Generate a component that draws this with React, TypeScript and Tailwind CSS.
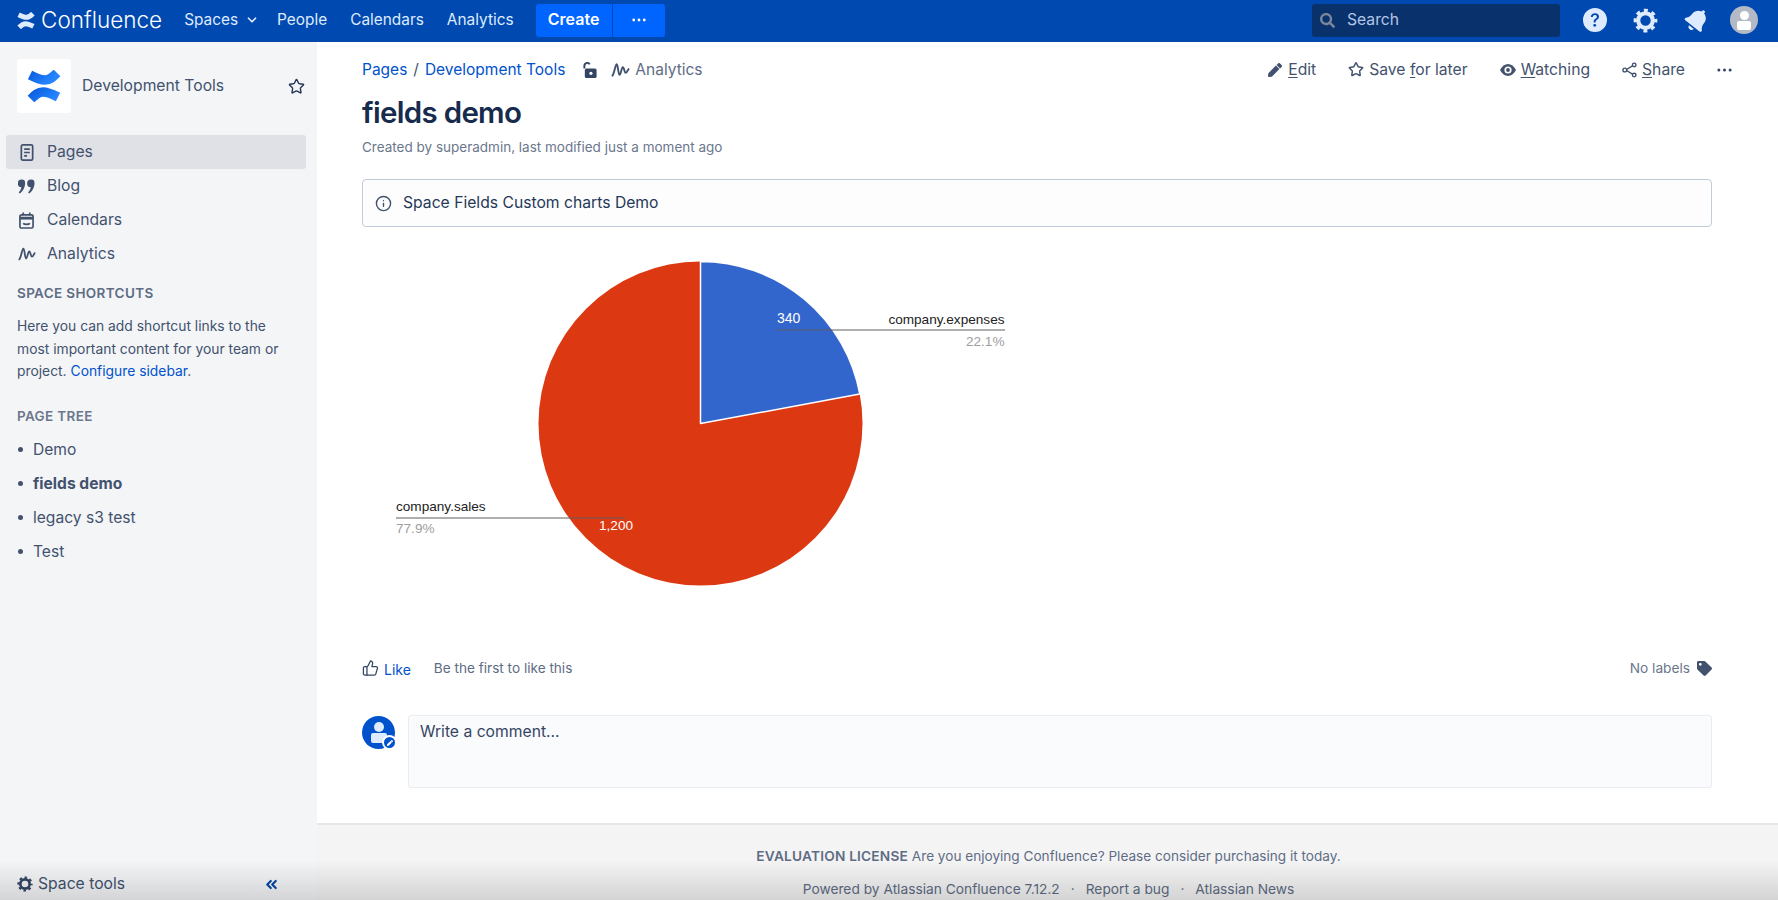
import { ChevronDown, ChevronsLeft, Info, Star, ThumbsUp } from "lucide-react";
import { FaBell, FaPen, FaSearch, FaTag } from "react-icons/fa";
import { BsQuestionCircleFill } from "react-icons/bs";

const topNav = [
  { label: "People", ml: "ml-[18px]" },
  { label: "Calendars", ml: "ml-[23px]" },
  { label: "Analytics", ml: "ml-[23px]" },
];

const tree = ["Demo", "fields demo", "legacy s3 test", "Test"];

function ConfluenceMark({ className, color }: { className: string; color: string }) {
  return (
    <svg viewBox="0 0 34 32" className={className} fill="none" strokeWidth="9.5">
      <defs>
        <linearGradient id="confBand" x1="0" y1="0" x2="1" y2="0.3">
          <stop offset="0" stopColor="#0b5fe0" />
          <stop offset="1" stopColor="#2684ff" />
        </linearGradient>
      </defs>
      <path d="M3 5 C9 8 13 10 18 10 C23 10 26 7 30 3" stroke={color} />
      <path d="M31 27 C25 24 21 22 16 22 C11 22 8 25 4 29" stroke={color} />
    </svg>
  );
}

function Dots({ className }: { className: string }) {
  return (
    <svg viewBox="0 0 16 4" className={className} fill="currentColor">
      <circle cx="2" cy="2" r="1.6" />
      <circle cx="8" cy="2" r="1.6" />
      <circle cx="14" cy="2" r="1.6" />
    </svg>
  );
}

function GearIcon({ className }: { className: string }) {
  return (
    <svg viewBox="0 0 24 24" className={className} fill="none" stroke="currentColor">
      <circle cx="12" cy="12" r="7" strokeWidth="4" />
      <circle cx="12" cy="12" r="9.8" strokeWidth="3.2" strokeDasharray="3.8 3.9" strokeDashoffset="1.9" />
    </svg>
  );
}

function PulseIcon({ className }: { className: string }) {
  return (
    <svg viewBox="0 0 20 16" className={className} fill="none" stroke="currentColor" strokeWidth="2" strokeLinecap="round" strokeLinejoin="round">
      <path d="M1.5 14 C3.5 12 4.5 2 6 2 C7.5 2 7.5 13 9 13 C10.5 13 11 5 12.5 5 C14 5 14 11 15.5 11 C17 11 17.5 8 18.5 7" />
    </svg>
  );
}

function QuoteIcon() {
  return (
    <svg viewBox="0 0 17 15" className="h-[15px] w-[17px]" fill="currentColor">
      <path d="M3.8 0.5a3.3 3.3 0 0 1 3.3 3.4c0 4.4-2.4 8.5-5.4 10.6l-1-1.2c1.4-1.6 2.4-3.2 2.7-5.1A3.3 3.3 0 0 1 3.8 0.5z" />
      <path d="M13.2 0.5a3.3 3.3 0 0 1 3.3 3.4c0 4.4-2.4 8.5-5.4 10.6l-1-1.2c1.4-1.6 2.4-3.2 2.7-5.1a3.3 3.3 0 0 1 .4-7.7z" />
    </svg>
  );
}

function EyeIcon() {
  return (
    <svg viewBox="0 0 16 12" className="h-[12px] w-[16px]">
      <path d="M0 6C2 2.2 5 0 8 0s6 2.2 8 6c-2 3.8-5 6-8 6S2 9.8 0 6z" fill="currentColor" />
      <circle cx="8" cy="6" r="3.6" fill="#fff" />
      <circle cx="8" cy="6" r="1.9" fill="currentColor" />
    </svg>
  );
}

function PagesIcon() {
  return (
    <svg viewBox="0 0 14 18" className="h-[17px] w-[14px]" fill="none" stroke="currentColor" strokeWidth="1.8">
      <rect x="1" y="1" width="12" height="16" rx="1.5" />
      <path d="M4 5.5h6M4 9h6M4 12.5h3" />
    </svg>
  );
}

function CalendarIcon() {
  return (
    <svg viewBox="0 0 16 18" className="h-[17px] w-[15px]" fill="none" stroke="currentColor" strokeWidth="1.8">
      <rect x="1" y="3" width="14" height="14" rx="1.5" />
      <path d="M1 6.5h14" strokeWidth="3" />
      <path d="M4.5 0.5v3M11.5 0.5v3" />
      <path d="M4.5 12c1 1.6 6 1.6 7 0" />
    </svg>
  );
}

function LockOpenIcon() {
  return (
    <svg viewBox="0 0 14 17" className="h-[16px] w-[14px]">
      <path d="M1 7V4a3 3 0 0 1 5.6-1.5" fill="none" stroke="currentColor" strokeWidth="2" />
      <rect x="1.5" y="7" width="12.5" height="10" rx="1.6" fill="currentColor" />
      <circle cx="8" cy="12" r="1.7" fill="#fff" />
    </svg>
  );
}

function ShareIcon() {
  return (
    <svg viewBox="0 0 16 16" className="h-[16px] w-[15px]" fill="none" stroke="currentColor" strokeWidth="1.5">
      <path d="M4 8 L12 3 M4 8 L12 13" />
      <circle cx="3" cy="8" r="2" fill="#fff" />
      <circle cx="13" cy="2.6" r="1.9" fill="#fff" />
      <circle cx="13" cy="13.4" r="1.9" fill="#fff" />
    </svg>
  );
}

function SideItem({ icon, label, active }: { icon: React.ReactNode; label: string; active?: boolean }) {
  return (
    <div className={`flex h-[34px] items-center rounded-[3px] ${active ? "bg-[#dfe1e6]" : ""}`}>
      <span className="flex w-[41px] shrink-0 justify-center px-[1px] text-[#42526e]">{icon}</span>
      <span className="text-[15.7px] text-[#42526e]">{label}</span>
    </div>
  );
}

function PieChart() {
  return (
    <svg width="700" height="400" className="block font-['Liberation_Sans',sans-serif]">
      <circle cx="338.5" cy="188.5" r="162" fill="#dc3912" />
      <path d="M338.5 188.5 V26.5 A162 162 0 0 1 497.8 159.1 Z" fill="#3366cc" stroke="#fff" strokeWidth="1.5" strokeLinejoin="round" />
      <text x="415" y="88" fontSize="14" fill="#fff">340</text>
      <text x="642.5" y="89" fontSize="13.6" fill="#222" textAnchor="end">company.expenses</text>
      <path d="M415 95 H643" stroke="#5f5f5f" strokeWidth="1" fill="none" />
      <text x="642.5" y="111" fontSize="13.6" fill="#9e9e9e" textAnchor="end">22.1%</text>
      <text x="34" y="276" fontSize="13.6" fill="#222">company.sales</text>
      <path d="M34 283 H263" stroke="#5f5f5f" strokeWidth="1" fill="none" />
      <text x="34" y="298" fontSize="13.6" fill="#9e9e9e">77.9%</text>
      <text x="237" y="295" fontSize="13.6" fill="#fff">1,200</text>
    </svg>
  );
}

function PageAction({ icon, before, hot, after, ml }: { icon: React.ReactNode; before?: string; hot: string; after: string; ml: string }) {
  return (
    <div className={`flex items-center gap-[5px] ${ml}`}>
      <span className="flex w-[16px] justify-center text-[#42526e]">{icon}</span>
      <span className="text-[15.7px] text-[#42526e]">
        {before}
        <span className="underline underline-offset-2">{hot}</span>
        {after}
      </span>
    </div>
  );
}

export default function App() {
  return (
    <div className="relative flex h-[900px] flex-col overflow-hidden bg-white font-['Inter',sans-serif] text-[#42526e]">
      <header className="flex h-[42px] shrink-0 items-center border-b border-[#0747a6] bg-[#0049b0] pb-[1px] text-[#deebff]">
        <ConfluenceMark className="ml-[17px] h-[17px] w-[18px]" color="#deebff" />
        <span className="ml-[6px] text-[22.5px] leading-none font-light text-white">Confluence</span>
        <span className="ml-[22px] text-[15.4px]">Spaces</span>
        <ChevronDown className="ml-[7px] h-[14px] w-[14px]" strokeWidth={3} />
        {topNav.map((n) => (
          <span key={n.label} className={`${n.ml} text-[15.4px]`}>
            {n.label}
          </span>
        ))}
        <div className="ml-[22px] flex h-[33px] w-[129px] items-center rounded-[3px] bg-[#0065ff] text-white">
          <span className="flex h-[33px] w-[77px] justify-center border-r border-[#0049b0] text-[16px] leading-[31px] font-semibold">Create</span>
          <span className="flex flex-1 justify-center">
            <Dots className="h-[4px] w-[14px]" />
          </span>
        </div>
        <div className="ml-auto flex h-[33px] w-[248px] items-center rounded-[3px] bg-[#09326c] pl-[8px]">
          <FaSearch className="h-[15px] w-[15px] text-[#7a869a]" />
          <span className="ml-[12px] text-[15.7px] text-[#b3c6e6]">Search</span>
        </div>
        <BsQuestionCircleFill className="ml-[23px] h-[24px] w-[24px]" />
        <GearIcon className="ml-[26px] h-[25px] w-[25px]" />
        <FaBell className="ml-[27px] h-[24px] w-[24px] rotate-[38deg]" />
        <div className="mr-[20px] ml-[21px] flex h-[28px] w-[28px] flex-col items-center justify-center rounded-full bg-[#b3bac5]">
          <span className="h-[9px] w-[9px] rounded-full bg-white" />
          <span className="mt-[1px] h-[9px] w-[14px] rounded-[2px] bg-white" />
        </div>
      </header>

      <div className="flex min-h-0 flex-1">
        <aside className="flex w-[317px] shrink-0 flex-col bg-[#f4f5f7] pt-[17px] pr-[11px] pl-[6px]">
          <div className="flex items-center pl-[11px]">
            <div className="flex h-[54px] w-[54px] items-center justify-center rounded-[3px] bg-white">
              <ConfluenceMark className="h-[32px] w-[34px]" color="url(#confBand)" />
            </div>
            <span className="ml-[11px] text-[15.7px] text-[#42526e]">Development Tools</span>
            <Star className="mr-[1px] ml-auto h-[17px] w-[17px] text-[#253858]" strokeWidth={2} />
          </div>
          <nav className="mt-[22px]">
            <SideItem active icon={<PagesIcon />} label="Pages" />
            <SideItem icon={<QuoteIcon />} label="Blog" />
            <SideItem icon={<CalendarIcon />} label="Calendars" />
            <SideItem icon={<PulseIcon className="h-[16px] w-[18px]" />} label="Analytics" />
          </nav>
          <div className="mt-[13px] pl-[11px]">
            <h4 className="text-[13.5px] leading-[18px] font-semibold tracking-[0.35px] text-[#5e6c84]">SPACE SHORTCUTS</h4>
            <p className="mt-[13px] text-[13.85px] leading-[22.5px] whitespace-nowrap text-[#42526e]">
              Here you can add shortcut links to the
              <br />
              most important content for your team or
              <br />
              project. <span className="text-[#0052cc]">Configure sidebar</span>.
            </p>
            <h4 className="mt-[24px] text-[13.5px] leading-[18px] font-semibold tracking-[0.35px] text-[#6b778c]">PAGE TREE</h4>
            <ul className="mt-[8px]">
              {tree.map((t) => (
                <li key={t} className="flex h-[34px] items-center">
                  <span className="ml-[1px] h-[5px] w-[5px] rounded-full bg-[#42526e]" />
                  <span className={`ml-[10px] text-[15.6px] ${t === "fields demo" ? "font-bold" : ""}`}>{t}</span>
                </li>
              ))}
            </ul>
          </div>
          <div className="mt-auto flex items-center pb-[4px] pl-[11px]">
            <GearIcon className="h-[16px] w-[16px] text-[#344563]" />
            <span className="ml-[5px] text-[15.7px] text-[#42526e]">Space tools</span>
            <ChevronsLeft className="mr-[26px] ml-auto h-[17px] w-[17px] text-[#0747a6]" strokeWidth={3} />
          </div>
        </aside>

        <main className="flex min-w-0 flex-1 flex-col">
          <div className="flex-1 pt-[13px] pr-[66px] pl-[45px]">
            <div className="flex h-[30px] items-center">
              <span className="text-[15.5px] text-[#0052cc]">Pages</span>
              <span className="mx-[6px] text-[15.5px] text-[#42526e]">/</span>
              <span className="text-[15.5px] text-[#0052cc]">Development Tools</span>
              <span className="ml-[18px] text-[#344563]">
                <LockOpenIcon />
              </span>
              <PulseIcon className="ml-[14px] h-[16px] w-[19px] text-[#42526e]" />
              <span className="ml-[5px] text-[15.5px] text-[#5e6c84]">Analytics</span>
              <PageAction ml="ml-auto" icon={<FaPen className="h-[14px] w-[14px]" />} hot="E" after="dit" />
              <PageAction ml="ml-[32px]" icon={<Star className="h-[17px] w-[17px]" strokeWidth={2.2} />} before="Save " hot="f" after="or later" />
              <PageAction ml="ml-[32px]" icon={<EyeIcon />} hot="W" after="atching" />
              <PageAction ml="ml-[31px]" icon={<ShareIcon />} hot="S" after="hare" />
              <Dots className="mr-[-20px] ml-[32px] h-[4px] w-[15px] text-[#344563]" />
            </div>
            <h1 className="mt-[7px] text-[29.5px] leading-[40px] font-semibold tracking-[-0.7px] text-[#172b4d]">fields demo</h1>
            <p className="mt-[5px] text-[13.5px] leading-[20px] text-[#6b778c]">Created by superadmin, last modified just a moment ago</p>
            <div className="mt-[22px] flex h-[48px] items-center rounded-[4px] border-[1.5px] border-[#c1ccd8] bg-[#fdfdfd] pl-[12px]">
              <Info className="h-[17px] w-[17px] text-[#42526e]" strokeWidth={2} />
              <span className="ml-[11px] text-[15.7px] text-[#253858]">Space Fields Custom charts Demo</span>
            </div>
            <div className="mt-[8px]">
              <PieChart />
            </div>
            <div className="mt-[21px] flex h-[24px] items-center">
              <ThumbsUp className="h-[18px] w-[17px] text-[#344563]" strokeWidth={1.8} />
              <span className="mt-[2px] ml-[5px] text-[14px] text-[#0052cc]">Like</span>
              <span className="ml-[23px] text-[13.6px] text-[#5e6c84]">Be the first to like this</span>
              <span className="ml-auto text-[13.7px] text-[#6b778c]">No labels</span>
              <FaTag className="ml-[7px] h-[15px] w-[15px] text-[#42526e]" />
            </div>
            <div className="mt-[35px] flex">
              <div className="relative mt-[1px] flex h-[33px] w-[33px] shrink-0 flex-col items-center justify-center rounded-full bg-[#0052cc]">
                <span className="h-[10px] w-[10px] rounded-full bg-[#deebff]" />
                <span className="mt-[1px] h-[10px] w-[16px] rounded-[2px] bg-[#deebff]" />
                <span className="absolute right-[-2px] bottom-[-1px] flex h-[15px] w-[15px] items-center justify-center rounded-full border-2 border-white bg-[#0052cc]">
                  <FaPen className="h-[6px] w-[6px] text-white" />
                </span>
              </div>
              <div className="ml-[13px] h-[73px] flex-1 rounded-[3px] border-[1.5px] border-[#ebecf0] bg-[#fafbfc] px-[11px] py-[4px] text-[15.7px] leading-[24px] text-[#344563]">
                Write a comment...
              </div>
            </div>
          </div>
          <footer className="h-[77px] shrink-0 border-t-2 border-[#e4e6ea] bg-[#f4f4f5] pt-[21px] pl-[2px] text-center">
            <p className="text-[13.6px] leading-[20px] text-[#5e6c84]">
              <b className="text-[13.7px] font-semibold tracking-[0.2px]">EVALUATION LICENSE</b> Are you enjoying Confluence? Please consider purchasing it today.
            </p>
            <p className="mt-[13px] text-[13.75px] leading-[20px] text-[#5e6c84]">
              Powered by Atlassian Confluence 7.12.2
              <span className="mx-[11px]">·</span>
              Report a bug
              <span className="mx-[11px]">·</span>
              Atlassian News
            </p>
          </footer>
        </main>
      </div>

      <div className="pointer-events-none absolute right-0 bottom-0 left-0 h-[40px] bg-gradient-to-b from-transparent to-[#00000022]" />
    </div>
  );
}
